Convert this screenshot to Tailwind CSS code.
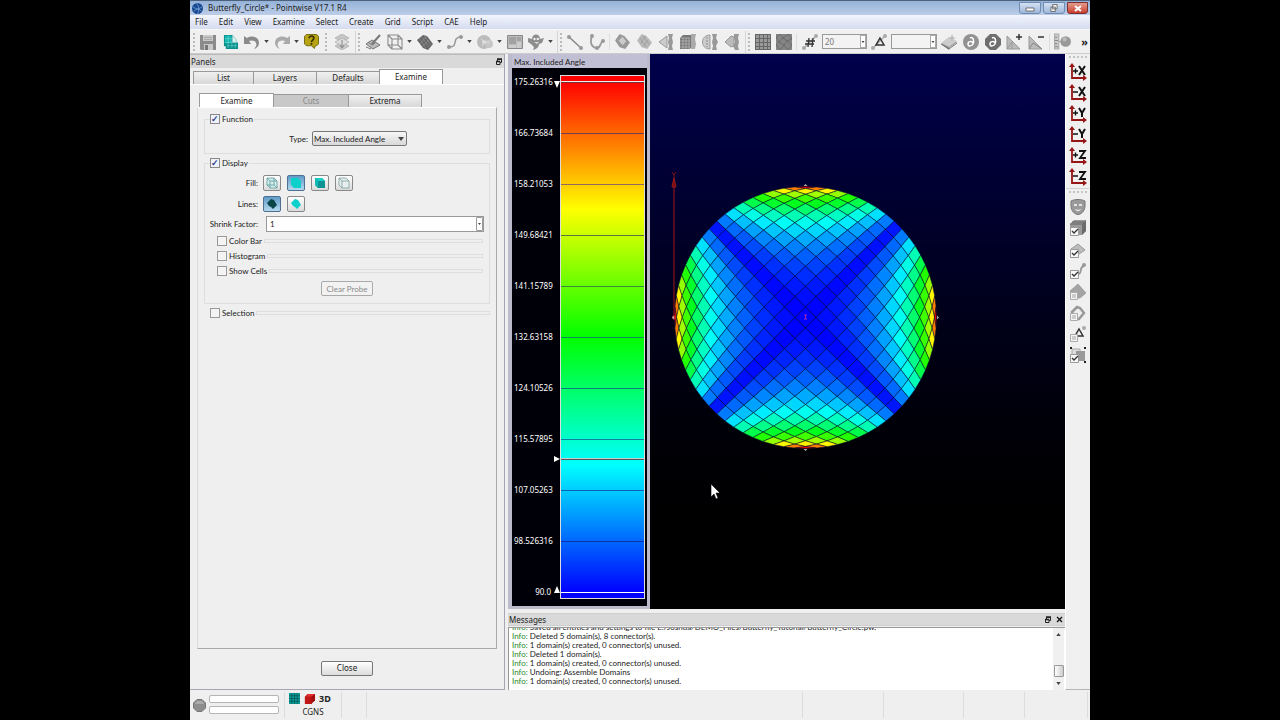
<!DOCTYPE html>
<html lang="en">
  <head>
    <meta charset="UTF-8" />
    <meta name="viewport" content="width=device-width, initial-scale=1.0" />
    <title>Butterfly_Circle* - Pointwise V17.1 R4</title>
    <script src="https://cdn.jsdelivr.net/npm/@tailwindcss/browser@4"></script>
  </head>
  <body class="h-screen overflow-hidden bg-black px-[190px] font-['Noto_Sans',sans-serif] text-[8px] leading-[10px] text-[#222]">
    <!-- Icon sprite -->
    <svg class="hidden" xmlns="http://www.w3.org/2000/svg">
      <symbol id="save" viewBox="0 0 16 16"><path fill="#8b8b8b" d="M0 1h16v15H1l-1-1z"/><path fill="#c9c9c9" d="M3 1h10v6H3zM4 10h9v6H4z"/><path fill="#777" d="M5 11h3v5H5z"/><path stroke="#aaa" d="M4 3.500h8M4 5.500h8"/></symbol>
      <symbol id="griddoc" viewBox="0 0 16 16"><path fill="#0b8f8c" d="M1 1h9v8h6v7H3v-3H1z"/><path fill="#16b6ae" d="M2 2h7v8H2z"/><path fill="none" stroke="#7fe6de" stroke-width=".5" d="M2 5h7M2 9h13M4 12.500h11M5.500 1v14M9.500 3v12M13 9v6"/><path fill="#d5f5f2" stroke="#6aa" stroke-width=".6" d="m10 1 4 5v3h-4z"/></symbol>
      <symbol id="undo" viewBox="0 0 16 16"><path fill="#8b8b8b" d="m0 2 3 2c5-3 12-1 12 5 0 3-2 5-5 6 2-2 3-4 2-6-1-3-5-3-7-2l2 3H0z"/></symbol>
      <symbol id="redo" viewBox="0 0 16 16"><path fill="#aaa" d="m16 2-3 2C8 1 1 3 1 9c0 3 2 5 5 6-2-2-3-4-2-6 1-3 5-3 7-2L9 10h7z"/></symbol>
      <symbol id="help" viewBox="0 0 16 16"><path fill="#b9a514" stroke="#6f640c" d="M2.500.500h11l2 2v8l-2 2H12l-1 3-3-3H2.500l-2-2v-8z"/><path fill="none" stroke="#3a3300" stroke-width="1.800" d="M5.500 4.500c0-3 5-3 5 0 0 2-2.500 2-2.500 4"/><circle cx="8" cy="10.500" r="1.100" fill="#3a3300"/></symbol>
      <symbol id="layers" viewBox="0 0 16 16"><path fill="#c6c6c6" stroke="#aaa" stroke-width=".7" d="m8 0 7 4-7 4-7-4z"/><path fill="#c6c6c6" stroke="#aaa" stroke-width=".7" d="m8 8 7 4-7 4-7-4z"/><path fill="#ddd" stroke="#aaa" stroke-width=".7" d="m8 4 7 4-7 4-7-4z"/><path stroke="#888" d="M8 6v7m-2-2 2 3 2-3" fill="none"/></symbol>
      <symbol id="brush" viewBox="0 0 16 16"><path fill="#bbb" stroke="#777" d="m1 10 6-4 8 5-7 4z"/><path fill="none" stroke="#777" d="m3 8 4 3 3-2M1 13l5 2"/><path stroke="#777" stroke-width="2" d="m7 10 8-9"/></symbol>
      <symbol id="cube" viewBox="0 0 16 16"><path fill="none" stroke="#8a8a8a" stroke-width="1.100" d="M1 1h10v10H1zM5 5h10v10H5zM1 1l4 4M11 1l4 4M1 11l4 4M11 11l4 4"/></symbol>
      <symbol id="diamond" viewBox="0 0 16 16"><path fill="#666" d="m0 6 6-5 4 1 6 8-5 6-5-2z"/><path fill="none" stroke="#999" stroke-width=".6" d="m2 4 7 10M4 2l8 11M7 2l7 9M3 10l7-8M5 13l8-8"/></symbol>
      <symbol id="curve" viewBox="0 0 16 16"><path fill="none" stroke="#999" stroke-width="1.500" d="M2 13c10 1 2-10 12-10"/><circle cx="2" cy="13" r="2" fill="#999"/><circle cx="14" cy="3" r="2" fill="#999"/></symbol>
      <symbol id="disc" viewBox="0 0 16 16"><circle cx="7" cy="8" r="7" fill="#bbb"/><circle cx="12" cy="10" r="4" fill="#c6c6c6"/><path fill="none" stroke="#ddd" d="M4 5l4 3-3 4M8 8h5"/><circle cx="7" cy="8" r="2" fill="#ddd"/></symbol>
      <symbol id="blocks" viewBox="0 0 16 16"><path fill="#bbb" stroke="#888" d="M.5 1.500h15v13H.500z"/><path fill="#a2a2a2" d="M2 3h7v7H2zM10 3h4v4h-4z"/><path fill="#ccc" d="M2 11h7v3H2zM10 8h4v6h-4z"/></symbol>
      <symbol id="ghost" viewBox="0 0 16 16"><path fill="#8d8d8d" d="M4 5c0-6 8-6 8 0l4-1-2 5-3 1c0 3-2 5-6 6l1-3-3-3-3-2 0-4z"/><circle cx="6.500" cy="5" r="1.200" fill="#eee"/><circle cx="9.800" cy="5" r="1.200" fill="#eee"/><path fill="#ddd" d="M6 8h5l-2 2z"/></symbol>
      <symbol id="line" viewBox="0 0 16 16"><path stroke="#888" stroke-width="1.500" d="m2 3 12 11"/><circle cx="2" cy="3" r="2" fill="#999"/><circle cx="14" cy="14" r="2" fill="#999"/></symbol>
      <symbol id="hook" viewBox="0 0 16 16"><path fill="none" stroke="#999" stroke-width="1.800" d="M3 2C0 10 4 14 8 14s3-6 6-7"/><circle cx="3" cy="2" r="2" fill="#999"/><circle cx="14" cy="7" r="2" fill="#999"/><circle cx="8" cy="14" r="2" fill="#999"/></symbol>
      <symbol id="diamond2" viewBox="0 0 16 16"><path fill="#999" d="m0 7 5-7 5 2 6 7-5 7-6-2z"/><path fill="#ccc" d="m4 7 4-4 4 5-4 4z"/></symbol>
      <symbol id="diamond3" viewBox="0 0 16 16"><path fill="#b9b9b9" d="m0 7 5-7 5 2 6 7-5 7-6-2z"/><path fill="none" stroke="#999" stroke-width=".8" d="m3 4 7 10M6 2l7 9M4 10l5-8M7 13l5-7"/></symbol>
      <symbol id="cone" viewBox="0 0 16 16"><path fill="#ccc" stroke="#999" d="m1 8 8-6v12z"/><path fill="#999" d="M10 0h5l-1 4 1 4-1 4 1 4h-5l1-4-1-4 1-4z"/></symbol>
      <symbol id="gridcube" viewBox="0 0 16 16"><path fill="#777" d="M0 4 3 1h9v11l-2 3H0z"/><path stroke="#bbb" stroke-width=".7" d="M0 7h10M0 10h10M0 13h10M3 4v11M6 4v11M9 4v11M0 4h10"/><path fill="#aaa" d="M11 0h5l-1 5 1 5-1 5h-4z"/></symbol>
      <symbol id="halves" viewBox="0 0 16 16"><path fill="#ccc" stroke="#999" d="M8 1C-2 1-2 15 8 15z"/><path fill="#999" d="M10 0h5l-1 4 2 4-2 4 1 4h-5l1-4-1-4 1-4z"/><path stroke="#888" d="M5 3v10" stroke-dasharray="2 1"/></symbol>
      <symbol id="plates" viewBox="0 0 16 16"><path fill="#bbb" stroke="#999" d="m1 8 6-6 3 1v9l-3 1z"/><path fill="#999" d="M10 0h5l-1 4 1 4-1 4 1 4h-4l-2-4 2-4-1-4z"/></symbol>
      <symbol id="mesh" viewBox="0 0 16 16"><path fill="#999" d="M0 0h16v16H0z"/><path stroke="#666" d="M0 .5h16M0 4.500h16M0 8.500h16M0 12.500h16M.5 0v16M4.500 0v16M8.500 0v16M12.500 0v16M0 15.500h16M15.500 0v16"/></symbol>
      <symbol id="trimesh" viewBox="0 0 16 16"><path fill="#858585" d="M0 0h16v16H0z"/><path fill="none" stroke="#666" stroke-width=".8" d="m0 3 4-3 3 4 5-4 4 5-5 2-4-3-4 4-3-5M3 8l5 3 3-4 5 4-4 5-4-5-4 5-4-5z"/></symbol>
      <symbol id="hash" viewBox="0 0 16 16"><path stroke="#aaa" stroke-width="1.500" d="m2 14 12-12"/><circle cx="2" cy="14" r="2" fill="#aaa"/><circle cx="14" cy="2" r="2" fill="#aaa"/><path stroke="#333" stroke-width="1.300" d="m7 4-1 9m5-9-1 9M4 7h9M3 10h9"/></symbol>
      <symbol id="delta" viewBox="0 0 16 16"><path stroke="#aaa" stroke-width="1.500" d="m2 14 12-12"/><circle cx="2" cy="14" r="2" fill="#aaa"/><circle cx="14" cy="2" r="2" fill="#aaa"/><path fill="none" stroke="#333" stroke-width="1.500" d="m9 4 4 7H5z"/></symbol>
      <symbol id="book" viewBox="0 0 16 16"><path fill="#888" d="m0 10 8-6 8 4-8 6v2z"/><path fill="#ccc" d="m0 9 8-6 8 4-8 6z"/><path stroke="#777" fill="none" d="m0 10 8 5 8-6"/><path fill="#bbb" d="m11 0 1 3 3 1-3 1-1 3-1-3-3-1 3-1z"/></symbol>
      <symbol id="partial" viewBox="0 0 16 16"><circle cx="8" cy="8" r="8" fill="#929292"/><path fill="none" stroke="#fff" stroke-width="1.500" d="M7 4c4-2 4 4 3 6s-5 3-5 0 4-3 5-1"/></symbol>
      <symbol id="partial8" viewBox="0 0 16 16"><path fill="#6e6e6e" d="M5 0h6l5 5v6l-5 5H5l-5-5V5z"/><path fill="none" stroke="#fff" stroke-width="1.500" d="M7 4c4-2 4 4 3 6s-5 3-5 0 4-3 5-1"/></symbol>
      <symbol id="triplus" viewBox="0 0 16 16"><path fill="#bbb" stroke="#999" d="M1 2v13h13z"/><path fill="none" stroke="#999" d="m1 15 5-7v7"/><path stroke="#333" stroke-width="1.500" d="M13 0v6m-3-3h6"/></symbol>
      <symbol id="triminus" viewBox="0 0 16 16"><path fill="#bbb" stroke="#999" d="M1 2v13h13z"/><path fill="none" stroke="#888" d="m1 15 4-6 9 6"/><path stroke="#333" stroke-width="1.500" d="M10 3h6"/></symbol>
      <symbol id="ruler" viewBox="0 0 16 16"><path fill="#ccc" stroke="#aaa" d="M.5 1h4v14h-4z"/><path stroke="#888" d="M1 4h2M1 7h3M1 10h2M1 13h3M5 8h3"/><circle cx="11" cy="8" r="5" fill="#999"/><circle cx="10" cy="6" r="2" fill="#bbb"/></symbol>
      <symbol id="down" viewBox="0 0 6 4"><path fill="#444" d="M0 0h6L3 4z"/></symbol>
      <symbol id="float" viewBox="0 0 8 8"><path fill="none" stroke="#222" d="M2.500 3V1.500h4v3H5M1 3.500h4v3H1.500v-3"/><path stroke="#222" stroke-width="1.500" d="M2 1h5M1 3.500h4"/></symbol>
      <!-- Axis triad -->
      <symbol id="axes" viewBox="0 0 18 18"><path fill="none" stroke="#961616" stroke-width="1.800" d="M3 2v13h13"/><path fill="#961616" d="M3 0 0 4h6zM18 15l-4-3v6z"/></symbol>
      <symbol id="x" viewBox="0 0 18 18"><path fill="none" stroke="#111" stroke-width="2" d="m10 3 6 9m0-9-6 9"/></symbol>
      <symbol id="y" viewBox="0 0 18 18"><path fill="none" stroke="#111" stroke-width="2" d="m10 3 3 5 3-5m-3 4v5"/></symbol>
      <symbol id="z" viewBox="0 0 18 18"><path fill="none" stroke="#111" stroke-width="1.800" d="M10 4h6l-5 7h6"/></symbol>
      <symbol id="plus" viewBox="0 0 18 18"><path stroke="#111" stroke-width="1.300" d="M4 8h5M6.500 5.500v5"/></symbol>
      <symbol id="minus" viewBox="0 0 18 18"><path stroke="#111" stroke-width="1.500" d="M4 8h5"/></symbol>
      <symbol id="mask" viewBox="0 0 16 16"><path fill="#9a9a9a" stroke="#777" d="M1 2c4-2 10-2 14 0v5c0 5-4 8.500-7 8.500S1 12 1 7z"/><path fill="#e4e4e4" d="M4 5h3v2H4zM9 5h3v2H9zM5 10c2 1 4 1 6 0-1 3-5 3-6 0z"/></symbol>
      <symbol id="tick" viewBox="0 0 16 16"><path fill="#f8f8f8" stroke="#999" d="M.500 7.500h8v8h-8z"/><path fill="none" stroke="#333" stroke-width="1.300" d="m2 11 2 2 4-4"/></symbol>
      <symbol id="notick" viewBox="0 0 16 16"><path fill="#f4f4f4" stroke="#aaa" d="M.500 8.500h7v7h-7z"/><path fill="#ccc" d="M2 10h4v4H2z"/></symbol>
      <symbol id="vblock" viewBox="0 0 16 16"><path fill="#999" d="M0 4 4 0h12v11l-4 4H0z"/><path fill="#6b6b6b" d="M12 4l4-4v11l-4 4z"/><path stroke="#555" stroke-width=".8" d="M0 4h12M2 2h12"/></symbol>
      <symbol id="vdomain" viewBox="0 0 16 16"><path fill="#bcbcbc" stroke="#999" d="m1 7 7-5 7 6-6 4z"/></symbol>
      <symbol id="vconn" viewBox="0 0 16 16"><path fill="none" stroke="#999" stroke-width="1.800" d="M6 11c8 1 2-7 8-8"/><circle cx="14" cy="2" r="2" fill="#999"/></symbol>
      <symbol id="vdb" viewBox="0 0 16 16"><path fill="#a4a4a4" stroke="#8d8d8d" stroke-width=".6" d="m0 7 8-7 8 9-6 5H2z"/></symbol>
      <symbol id="vring" viewBox="0 0 16 16"><path fill="#eee" stroke="#999" stroke-width="2.500" d="m2 7 5-5 3 1 4 5-5 6H5z"/></symbol>
      <symbol id="vdelta" viewBox="0 0 16 16"><circle cx="14" cy="2" r="2" fill="#aaa"/><path fill="none" stroke="#333" stroke-width="1.500" d="m9 3 4 7H5z"/></symbol>
      <symbol id="vsel" viewBox="0 0 16 16"><path fill="#ddd" stroke="#aaa" d="M2 2h8v8H2z"/><path fill="#999" d="M6 4h9v10H6z"/><path fill="#222" d="M0 0h2v2H0zM14 0h2v2h-2zM14 14h2v2h-2z"/></symbol>
    </svg>

    <div class="flex h-full flex-col bg-[#efefef]">
      <!-- Title bar -->
      <header class="flex h-[15px] shrink-0 items-center border-t border-[#4e617b] bg-gradient-to-b from-[#94b2d8] to-[#bccde8] pl-[2px] pr-[2px]">
        <svg class="h-[11px] w-[11px]" viewBox="0 0 12 12"><circle cx="6" cy="6" r="6" fill="#1a4a92"/><path fill="none" stroke="#8ab4e4" stroke-width=".7" d="M1 4c3 3 7 3 10 0M5 0c3 4 3 8 1 12M2 9c3-3 6-3 8 0"/></svg>
        <h1 class="ml-[5px] flex-1">Butterfly_Circle* - Pointwise V17.1 R4</h1>
        <div class="flex gap-[2px]">
          <button aria-label="Minimize" class="flex h-[12px] w-[22px] items-center justify-center rounded-b-[3px] border border-[#6f8bb0] bg-gradient-to-b from-[#d3e0f2] to-[#9fb8da]"><svg class="h-[8px] w-[10px]" viewBox="0 0 10 8"><path fill="#fff" stroke="#555" stroke-width=".8" d="M1 4h8v3H1z"/></svg></button>
          <button aria-label="Restore" class="flex h-[12px] w-[22px] items-center justify-center rounded-b-[3px] border border-[#6f8bb0] bg-gradient-to-b from-[#d3e0f2] to-[#9fb8da]"><svg class="h-[8px] w-[10px]" viewBox="0 0 10 9"><path fill="#eee" stroke="#666" d="M3.500.500h5v5h-5zM1.500 3.500h5v5h-5z"/></svg></button>
          <button aria-label="Close window" class="flex h-[12px] w-[21px] items-center justify-center rounded-b-[3px] border border-[#7a3030] bg-gradient-to-b from-[#e39a8c] to-[#c83a2c]"><svg class="h-[7px] w-[8px]" viewBox="0 0 8 7"><path stroke="#fff" stroke-width="2" d="m1 1 6 5m0-5L1 6"/></svg></button>
        </div>
      </header>

      <!-- Menu bar -->
      <nav class="flex h-[15px] shrink-0 items-center gap-[11px] border-b border-[#f6f6f6] bg-gradient-to-b from-[#f2f5fc] to-[#d6dcf0] pl-[5px]">
        <button>File</button><button>Edit</button><button>View</button><button>Examine</button><button>Select</button><button>Create</button><button>Grid</button><button>Script</button><button>CAE</button><button>Help</button>
      </nav>

      <!-- Toolbar -->
      <div class="flex h-[24px] shrink-0 items-center border-b border-[#ccc] bg-[#f0f0f0] pl-[3px]">
        <i class="mr-[2px] h-[18px] border-l-2 border-dotted border-[#bbb]"></i>
        <button aria-label="Save" class="flex w-[22px] justify-center"><svg class="size-[16px]"><use href="#save"/></svg></button>
        <button aria-label="Import grid" class="flex w-[22px] justify-center"><svg class="size-[15px]"><use href="#griddoc"/></svg></button>
        <button aria-label="Undo" class="flex w-[21px] justify-center"><svg class="size-[16px]"><use href="#undo"/></svg></button>
        <button aria-label="Undo list" class="flex w-[9px] justify-center"><svg class="h-[3px] w-[5px]"><use href="#down"/></svg></button>
        <button aria-label="Redo" class="flex w-[21px] justify-center"><svg class="size-[16px]"><use href="#redo"/></svg></button>
        <button aria-label="Redo list" class="flex w-[9px] justify-center"><svg class="h-[3px] w-[5px]"><use href="#down"/></svg></button>
        <button aria-label="Help" class="flex w-[21px] justify-center"><svg class="size-[15px]"><use href="#help"/></svg></button>
        <i class="mx-[3px] h-[18px] border-l-2 border-dotted border-[#bbb]"></i>
        <button aria-label="Layers" class="flex w-[24px] justify-center"><svg class="size-[16px]"><use href="#layers"/></svg></button>
        <i class="ml-[1px] h-[22px] border-l border-[#d5d5d5]"></i>
        <i class="mx-[2px] h-[18px] border-l-2 border-dotted border-[#bbb]"></i>
        <button aria-label="Draw" class="flex w-[22px] justify-center"><svg class="size-[16px]"><use href="#brush"/></svg></button>
        <button aria-label="Blocks" class="flex w-[21px] justify-center"><svg class="size-[16px]"><use href="#cube"/></svg></button>
        <button aria-label="Blocks list" class="flex w-[9px] justify-center"><svg class="h-[3px] w-[5px]"><use href="#down"/></svg></button>
        <button aria-label="Domains" class="flex w-[21px] justify-center"><svg class="size-[16px]"><use href="#diamond"/></svg></button>
        <button aria-label="Domains list" class="flex w-[9px] justify-center"><svg class="h-[3px] w-[5px]"><use href="#down"/></svg></button>
        <button aria-label="Connectors" class="flex w-[21px] justify-center"><svg class="size-[16px]"><use href="#curve"/></svg></button>
        <button aria-label="Connectors list" class="flex w-[9px] justify-center"><svg class="h-[3px] w-[5px]"><use href="#down"/></svg></button>
        <button aria-label="Database" class="flex w-[21px] justify-center"><svg class="size-[16px]"><use href="#disc"/></svg></button>
        <button aria-label="Database list" class="flex w-[9px] justify-center"><svg class="h-[3px] w-[5px]"><use href="#down"/></svg></button>
        <button aria-label="Assemble" class="flex w-[21px] justify-center"><svg class="size-[16px]"><use href="#blocks"/></svg></button>
        <button aria-label="Ghost" class="flex w-[21px] justify-center"><svg class="size-[16px]"><use href="#ghost"/></svg></button>
        <button aria-label="Ghost list" class="flex w-[9px] justify-center"><svg class="h-[3px] w-[5px]"><use href="#down"/></svg></button>
        <i class="ml-[2px] h-[22px] border-l border-[#d5d5d5]"></i>
        <i class="mx-[2px] h-[18px] border-l-2 border-dotted border-[#bbb]"></i>
        <button aria-label="Line" class="flex w-[22px] justify-center"><svg class="size-[16px]"><use href="#line"/></svg></button>
        <button aria-label="Curve" class="flex w-[22px] justify-center"><svg class="size-[16px]"><use href="#hook"/></svg></button>
        <i class="mx-[1px] h-[16px] border-l border-[#ddd]"></i>
        <button aria-label="Structured" class="flex w-[22px] justify-center"><svg class="size-[15px]"><use href="#diamond2"/></svg></button>
        <button aria-label="Unstructured" class="flex w-[22px] justify-center"><svg class="size-[15px]"><use href="#diamond3"/></svg></button>
        <button aria-label="Extrude" class="flex w-[22px] justify-center"><svg class="size-[16px]"><use href="#cone"/></svg></button>
        <button aria-label="Block extrude" class="flex w-[22px] justify-center"><svg class="size-[16px]"><use href="#gridcube"/></svg></button>
        <button aria-label="Rotate" class="flex w-[22px] justify-center"><svg class="size-[16px]"><use href="#halves"/></svg></button>
        <button aria-label="Translate" class="flex w-[22px] justify-center"><svg class="size-[16px]"><use href="#plates"/></svg></button>
        <i class="ml-[2px] h-[22px] border-l border-[#d5d5d5]"></i>
        <i class="mx-[2px] h-[18px] border-l-2 border-dotted border-[#bbb]"></i>
        <button aria-label="Structured mesh" class="flex w-[21px] justify-center"><svg class="size-[16px]"><use href="#mesh"/></svg></button>
        <button aria-label="Triangle mesh" class="flex w-[22px] justify-center"><svg class="size-[16px]"><use href="#trimesh"/></svg></button>
        <i class="mx-[1px] h-[16px] border-l border-[#ddd]"></i>
        <button aria-label="Dimension" class="flex w-[24px] justify-center"><svg class="size-[16px]"><use href="#hash"/></svg></button>
        <span class="relative">
          <input aria-label="Dimension value" value="20" class="block h-[15px] w-[45px] border border-[#999] bg-[#f3f3f3] pl-[2px] text-[#777]" />
          <span class="absolute right-[1px] top-[1px] flex h-[13px] w-[6px] items-center justify-center border border-[#aaa] bg-white"><svg class="h-[2px] w-[4px]"><use href="#down"/></svg></span>
        </span>
        <button aria-label="Spacing" class="flex w-[24px] justify-center"><svg class="size-[16px]"><use href="#delta"/></svg></button>
        <span class="relative">
          <input aria-label="Spacing value" class="block h-[15px] w-[46px] border border-[#999] bg-[#f3f3f3] pl-[2px]" />
          <span class="absolute right-[1px] top-[1px] flex h-[13px] w-[6px] items-center justify-center border border-[#aaa] bg-white"><svg class="h-[2px] w-[4px]"><use href="#down"/></svg></span>
        </span>
        <button aria-label="Solve" class="ml-[1px] flex w-[22px] justify-center"><svg class="size-[16px]"><use href="#book"/></svg></button>
        <button aria-label="Initialize" class="flex w-[22px] justify-center"><svg class="size-[16px]"><use href="#partial"/></svg></button>
        <button aria-label="Stop" class="flex w-[21px] justify-center"><svg class="size-[16px]"><use href="#partial8"/></svg></button>
        <button aria-label="Refine" class="flex w-[22px] justify-center"><svg class="size-[16px]"><use href="#triplus"/></svg></button>
        <button aria-label="Coarsen" class="flex w-[22px] justify-center"><svg class="size-[16px]"><use href="#triminus"/></svg></button>
        <i class="mx-[2px] h-[16px] border-l border-[#ddd]"></i>
        <button aria-label="Measure" class="flex w-[20px] shrink-0 justify-center"><svg class="size-[17px]"><use href="#ruler"/></svg></button>
        <button aria-label="More tools" class="ml-auto mr-[2px] text-[11px] font-bold">»</button>
      </div>

      <div class="flex min-h-0 flex-1">
        <!-- Panels -->
        <aside class="mr-[3px] flex w-[315px] shrink-0 flex-col border-b border-r border-[#a5a5b4]">
          <div class="flex h-[14px] shrink-0 items-center justify-between border-t border-[#bbb] bg-[#d9d9d9] pl-px pr-px">
            <h2>Panels</h2>
            <button aria-label="Float panel"><svg class="size-[8px]"><use href="#float"/></svg></button>
          </div>
          <div class="flex h-[17px] shrink-0 items-end border-b border-white pl-[3px] pt-[2px]">
            <button class="h-[13px] w-[61px] border border-b-0 border-[#999] bg-gradient-to-b from-[#f0f0f0] to-[#d8d8d8]">List</button>
            <button class="h-[13px] w-[63px] border border-b-0 border-l-0 border-[#999] bg-gradient-to-b from-[#f0f0f0] to-[#d8d8d8]">Layers</button>
            <button class="h-[13px] w-[62px] border border-x-0 border-b-0 border-[#999] bg-gradient-to-b from-[#f0f0f0] to-[#d8d8d8]">Defaults</button>
            <button class="h-[15px] w-[64px] border border-b-0 border-[#999] bg-white">Examine</button>
          </div>
          <div class="flex flex-1 flex-col px-[7px] pt-[8px]">
            <div class="flex h-[14px] shrink-0 items-end pl-[2px]">
              <button class="h-[14px] w-[75px] border border-b-0 border-[#999] bg-white">Examine</button>
              <button disabled class="h-[13px] w-[75px] border border-b-0 border-l-0 border-[#999] bg-[#c8c8c8] text-[#888]">Cuts</button>
              <button class="h-[13px] w-[73px] border border-b-0 border-l-0 border-[#999] bg-gradient-to-b from-[#f0f0f0] to-[#d8d8d8]">Extrema</button>
            </div>
            <div class="flex-1 border border-b-[#aaa] border-l-[#ddd] border-r-[#aaa] border-t-white px-[6px] pt-[6px] font-[Lato,sans-serif]">
              <fieldset class="h-[40px] border border-[#dedede]">
                <legend class="ml-[5px] pr-px"><label class="flex items-center gap-[2px]"><input type="checkbox" checked class="flex size-[10px] appearance-none items-center justify-center border border-[#888] bg-[#eef2fa] text-[9px] font-bold text-[#2c3f8c] checked:before:content-['✓']" />Function</label></legend>
                <div class="mt-[7px] flex items-center">
                  <label for="type" class="w-[103px] text-right">Type:</label>
                  <span class="relative ml-[4px]">
                    <select id="type" class="block h-[15px] w-[95px] appearance-none rounded-[2px] border border-[#777] bg-gradient-to-b from-[#f6f6f6] to-[#d8d8d8] pl-px"><option>Max. Included Angle</option></select>
                    <svg class="pointer-events-none absolute right-[3px] top-[6px] h-[4px] w-[6px]"><use href="#down"/></svg>
                  </span>
                </div>
              </fieldset>

              <fieldset class="mt-[4px] h-[146px] border border-[#dedede]">
                <legend class="ml-[5px] pr-px"><label class="flex items-center gap-[2px]"><input type="checkbox" checked class="flex size-[10px] appearance-none items-center justify-center border border-[#888] bg-[#eef2fa] text-[9px] font-bold text-[#2c3f8c] checked:before:content-['✓']" />Display</label></legend>
                <div class="mt-[7px] flex items-center">
                  <span class="mr-[5px] w-[53px] text-right">Fill:</span>
                  <div class="flex gap-[6px]">
                    <button aria-label="No fill" class="flex h-[16px] w-[18px] items-center justify-center rounded-[2px] border border-[#888] bg-gradient-to-b from-white to-[#dadada]"><svg class="size-[12px]" viewBox="0 0 12 12"><path fill="#d7eeee" stroke="#5a9a9a" stroke-width=".8" d="M1 1h7l3 3v7H4L1 8zM4 4h7M4 4v7M1 1l3 3M8 1v7H1M8 8l3 3"/></svg></button>
                    <button aria-label="Flat fill" class="flex h-[16px] w-[18px] items-center justify-center rounded-[2px] border border-[#4d6f92] bg-gradient-to-b from-[#5f9bc8] to-[#b4d9ef]"><svg class="size-[12px]" viewBox="0 0 12 12"><path fill="#0bd0cb" d="M1 1h7l3 3v7H4L1 8z"/></svg></button>
                    <button aria-label="Shaded fill" class="flex h-[16px] w-[18px] items-center justify-center rounded-[2px] border border-[#888] bg-gradient-to-b from-white to-[#dadada]"><svg class="size-[12px]" viewBox="0 0 12 12"><path fill="#0b9492" d="M1 1h7l3 3v7H4L1 8z"/><path fill="#15cfc6" d="M1 1h7l3 3H4z"/><path fill="#12b8b4" d="m1 1 3 3v7L1 8z"/></svg></button>
                    <button aria-label="Hidden line" class="flex h-[16px] w-[18px] items-center justify-center rounded-[2px] border border-[#888] bg-gradient-to-b from-white to-[#dadada]"><svg class="size-[12px]" viewBox="0 0 12 12"><path fill="#e8eeee" stroke="#7b9c9c" stroke-width=".8" d="M1 1h7l3 3v7H4L1 8zM4 4h7M4 4v7M1 1l3 3"/></svg></button>
                  </div>
                </div>
                <div class="mt-[5px] flex items-center">
                  <span class="mr-[5px] w-[53px] text-right">Lines:</span>
                  <div class="flex gap-[6px]">
                    <button aria-label="Black lines" class="flex h-[16px] w-[18px] items-center justify-center rounded-[2px] border border-[#4d6f92] bg-gradient-to-b from-[#5f9bc8] to-[#b4d9ef]"><svg class="size-[12px]" viewBox="0 0 12 12"><path fill="#0a4548" d="m1 5 4-4 3 1 3 5-4 4-2-2-2-1z"/></svg></button>
                    <button aria-label="Colored lines" class="flex h-[16px] w-[18px] items-center justify-center rounded-[2px] border border-[#888] bg-gradient-to-b from-white to-[#dadada]"><svg class="size-[12px]" viewBox="0 0 12 12"><path fill="#0bd0cb" d="m1 5 4-4 3 1 3 5-4 4-2-2-2-1z"/></svg></button>
                  </div>
                </div>
                <div class="mt-[4px] flex items-center">
                  <label for="shrink" class="mr-[8px] w-[53px] whitespace-nowrap text-right">Shrink Factor:</label>
                  <span class="relative mr-[5px] flex-1">
                    <input id="shrink" value="1" class="block h-[16px] w-full border border-[#999] bg-white pl-[3px]" />
                    <span class="absolute right-px top-px flex h-[14px] w-[7px] items-center justify-center rounded-[1px] border border-[#999] bg-white"><svg class="h-[2px] w-[3px]"><use href="#down"/></svg></span>
                  </span>
                </div>
                <div class="ml-[12px] mr-[6px] mt-[4px] flex flex-col gap-[5px]">
                  <div class="flex items-center gap-[2px]"><label class="flex items-center gap-[2px]"><input type="checkbox" class="size-[10px] appearance-none border border-[#999] bg-[#f4f4f4]" />Color Bar</label><i class="h-[4px] flex-1 border border-[#dedede]"></i></div>
                  <div class="flex items-center gap-[2px]"><label class="flex items-center gap-[2px]"><input type="checkbox" class="size-[10px] appearance-none border border-[#999] bg-[#f4f4f4]" />Histogram</label><i class="h-[4px] flex-1 border border-[#dedede]"></i></div>
                  <div class="flex items-center gap-[2px]"><label class="flex items-center gap-[2px]"><input type="checkbox" class="size-[10px] appearance-none border border-[#999] bg-[#f4f4f4]" />Show Cells</label><i class="h-[4px] flex-1 border border-[#dedede]"></i></div>
                </div>
                <button disabled class="mx-auto mt-[5px] block h-[15px] w-[52px] rounded-[2px] border border-[#aaa] bg-[#f2f2f2] text-[#8a8a8a]">Clear Probe</button>
              </fieldset>

              <div class="mt-[4px] flex items-center gap-[2px] pl-[6px]"><label class="flex items-center gap-[2px]"><input type="checkbox" class="size-[10px] appearance-none border border-[#999] bg-[#f4f4f4]" />Selection</label><i class="h-[4px] flex-1 border border-[#dedede]"></i></div>
            </div>
            <div class="flex h-[40px] shrink-0 items-center justify-center pb-[2px]">
              <button class="h-[15px] w-[52px] rounded-[2px] border border-[#777] bg-gradient-to-b from-white to-[#dcdcdc]">Close</button>
            </div>
          </div>
        </aside>

        <main class="flex min-w-0 flex-1 flex-col">
          <div class="flex min-h-0 flex-1">
            <!-- Color scale -->
            <section class="flex w-[142px] shrink-0 flex-col border-b-[3px] border-l-4 border-r-[3px] border-[#bbbbcb] bg-[#c0bfd3]">
              <h2 class="h-[14px] shrink-0 pl-[2px] pt-[3px] font-[Lato,sans-serif]">Max. Included Angle</h2>
              <div class="relative flex flex-1 justify-between bg-[#000008] pl-[2px] pr-[2px]">
                <div class="flex w-[37px] flex-col justify-between pb-[9px] pt-[9px] text-right text-white">
                  <span>175.26316</span><span>166.73684</span><span>158.21053</span><span>149.68421</span><span>141.15789</span><span>132.63158</span><span>124.10526</span><span>115.57895</span><span>107.05263</span><span>98.526316</span><span>90.0</span>
                </div>
                <div class="my-[7px] flex w-[85px] flex-col justify-between border border-[#ddd] bg-[linear-gradient(#f00_1%,#ff0_25.500%,#0f0_50%,#0ff_74.500%,#00f_99%)] py-[5px]">
                  <i class="h-[2px] border-b border-[#7a3030] bg-[#eee]"></i>
                  <i class="h-px bg-[#704050]"></i><i class="h-px bg-[#906a60]"></i><i class="h-px bg-[#587840]"></i><i class="h-px bg-[#3a8a40]"></i><i class="h-px bg-[#108a60]"></i><i class="h-px bg-[#107a80]"></i><i class="h-px bg-[#1080a0]"></i><i class="h-px bg-[#0a60b0]"></i><i class="h-px bg-[#0a30b0]"></i>
                  <i class="h-px bg-white"></i>
                </div>
                <!-- Range markers -->
                <svg class="absolute right-[87px] top-[13px] h-[7px] w-[6px]" viewBox="0 0 6 7"><path fill="#fff" d="M0 0h6L3 7z"/></svg>
                <svg class="absolute bottom-[13px] right-[87px] h-[7px] w-[6px]" viewBox="0 0 6 7"><path fill="#fff" d="M0 7h6L3 0z"/></svg>
                <svg class="absolute right-[87px] top-[388px] h-[6px] w-[6px]" viewBox="0 0 6 6"><path fill="#fff" d="M0 0v6l6-3z"/></svg>
                <i class="absolute right-[3px] top-[390px] h-[2px] w-[83px] border-b border-[#555] bg-[#ccc]"></i>
              </div>
            </section>

            <!-- Viewport -->
            <section class="min-w-0 flex-1 overflow-hidden bg-gradient-to-b from-[#00004c] to-black">
              <svg id="view" class="h-full w-full" viewBox="0 0 415 554" preserveAspectRatio="xMinYMin meet">
                <g id="cells" stroke="#001030" stroke-width=".5"></g>
                <g stroke="#a01818" fill="none"><path d="M24 262V128"/><path fill="#701010" d="m24 124-2 9h4z"/><path d="m22 118 2 3 2-3m-2 3v3" stroke-width=".8"/><path d="M154 261h3m-1.500 0v4m-1.500 0h3" stroke="#c030a0" stroke-width=".8"/></g>
                <circle cx="24" cy="263.500" r="2" fill="#d02020"/>
                <path fill="#aaa" d="m155.500 130 2 2h-4zM155.500 397l2-2h-4zM289 263.500l-2-2v4zM22 263.500l2-2v4z"/>
                <path fill="#fff" stroke="#000" stroke-width=".6" d="M61 430v13l3-3 2 5 2-1-2-5h4z"/>
              </svg>
            </section>
          </div>

          <!-- Messages -->
          <section class="mt-[4px] flex h-[77px] shrink-0 flex-col">
            <div class="flex h-[13px] shrink-0 items-center border-y border-[#cfcfcf] bg-[#d9d9d9] pl-px pr-[2px]">
              <h2 class="flex-1">Messages</h2>
              <button aria-label="Float messages" class="mr-[4px]"><svg class="size-[8px]"><use href="#float"/></svg></button>
              <button aria-label="Close messages"><svg class="size-[7px]" viewBox="0 0 7 7"><path stroke="#111" stroke-width="1.300" d="m1 1 5 5m0-5L1 6"/></svg></button>
            </div>
            <div class="mt-px flex min-h-0 flex-1 border-l border-t border-[#999] bg-white">
              <div class="flex flex-1 flex-col justify-end overflow-hidden whitespace-nowrap pb-[4px] pl-[3px] font-[Lato,sans-serif] leading-[9px]">
                <p><span class="text-[#2a8a2a]">Info:</span> Saved all entities and settings to file E:/Joshua/DEMO_Files/Butterfly_Tutorial/Butterfly_Circle.pw.</p>
                <p><span class="text-[#2a8a2a]">Info:</span> Deleted 5 domain(s), 8 connector(s).</p>
                <p><span class="text-[#2a8a2a]">Info:</span> 1 domain(s) created, 0 connector(s) unused.</p>
                <p><span class="text-[#2a8a2a]">Info:</span> Deleted 1 domain(s).</p>
                <p><span class="text-[#2a8a2a]">Info:</span> 1 domain(s) created, 0 connector(s) unused.</p>
                <p><span class="text-[#2a8a2a]">Info:</span> Undoing: Assemble Domains</p>
                <p><span class="text-[#2a8a2a]">Info:</span> 1 domain(s) created, 0 connector(s) unused.</p>
              </div>
              <div class="mr-px flex w-[11px] flex-col items-center bg-[#f0f0f0] py-[5px]">
                <svg class="h-[3px] w-[5px] rotate-180"><use href="#down"/></svg>
                <i class="mt-auto h-[12px] w-[10px] rounded-[1px] border border-[#999] bg-gradient-to-r from-white to-[#ccc]"></i>
                <svg class="mt-[5px] h-[3px] w-[5px]"><use href="#down"/></svg>
              </div>
            </div>
          </section>
        </main>

        <!-- View toolbar -->
        <div class="flex w-[25px] shrink-0 flex-col items-center border-b border-l border-b-[#b5b5b5] border-l-white bg-[#f0f0f0] pr-px pt-[2px]">
          <i class="mb-[3px] w-[18px] border-t-2 border-dotted border-[#c4c4c4]"></i>
          <button aria-label="+X view" class="flex h-[21px] items-center"><svg class="size-[18px]"><use href="#axes"/><use href="#plus"/><use href="#x"/></svg></button>
          <button aria-label="-X view" class="flex h-[21px] items-center"><svg class="size-[18px]"><use href="#axes"/><use href="#minus"/><use href="#x"/></svg></button>
          <button aria-label="+Y view" class="flex h-[21px] items-center"><svg class="size-[18px]"><use href="#axes"/><use href="#plus"/><use href="#y"/></svg></button>
          <button aria-label="-Y view" class="flex h-[21px] items-center"><svg class="size-[18px]"><use href="#axes"/><use href="#minus"/><use href="#y"/></svg></button>
          <button aria-label="+Z view" class="flex h-[21px] items-center"><svg class="size-[18px]"><use href="#axes"/><use href="#plus"/><use href="#z"/></svg></button>
          <button aria-label="-Z view" class="flex h-[21px] items-center"><svg class="size-[18px]"><use href="#axes"/><use href="#minus"/><use href="#z"/></svg></button>
          <i class="mb-[2px] mt-px w-full border-t border-[#d0d0d0]"></i>
          <i class="mb-[3px] w-[18px] border-t-2 border-dotted border-[#c4c4c4]"></i>
          <button aria-label="Mask" class="flex h-[21px] items-center"><svg class="size-[16px]"><use href="#mask"/></svg></button>
          <button aria-label="Show blocks" class="flex h-[22px] items-center"><svg class="size-[16px]"><use href="#vblock"/><use href="#tick"/></svg></button>
          <button aria-label="Show domains" class="flex h-[21px] items-center"><svg class="size-[16px]"><use href="#vdomain"/><use href="#tick"/></svg></button>
          <button aria-label="Show connectors" class="flex h-[21px] items-center"><svg class="size-[16px]"><use href="#vconn"/><use href="#tick"/></svg></button>
          <button aria-label="Show database" class="flex h-[21px] items-center"><svg class="size-[16px]"><use href="#vdb"/><use href="#notick"/></svg></button>
          <button aria-label="Show boundaries" class="flex h-[21px] items-center"><svg class="size-[16px]"><use href="#vring"/><use href="#notick"/></svg></button>
          <button aria-label="Show spacings" class="flex h-[21px] items-center"><svg class="size-[16px]"><use href="#vdelta"/><use href="#notick"/></svg></button>
          <button aria-label="Show selection" class="flex h-[21px] items-center"><svg class="size-[16px]"><use href="#vsel"/><use href="#tick"/></svg></button>
        </div>
      </div>

      <!-- Status bar -->
      <footer class="flex h-[30px] shrink-0 pb-[2px] pl-[3px] pt-[2px]">
        <svg class="mr-[3px] mt-[7px] size-[13px]" viewBox="0 0 13 13"><path fill="#8d8d8d" stroke="#777" d="M4 .5h5L12.500 4v5L9 12.500H4L.500 9V4z"/><path fill="#aaa" d="M4 2h5l2 3H2z"/></svg>
        <div class="flex w-[70px] flex-col gap-[3px] pt-[3px]">
          <i class="h-[8px] rounded-[2px] border border-[#b5b5b5] bg-white"></i>
          <i class="h-[8px] rounded-[2px] border border-[#b5b5b5] bg-white"></i>
        </div>
        <div class="ml-[5px] flex w-[58px] flex-col items-center border-x border-[#dcdcdc] pt-[1px]">
          <div class="flex items-center gap-[4px] self-start pl-[4px]">
            <svg class="size-[11px]" viewBox="0 0 12 12"><path fill="#0a9a97" d="M0 0h12v12H0z"/><path stroke="#05504f" stroke-width=".7" d="M0 3h12M0 6h12M0 9h12M3 0v12M6 0v12M9 0v12"/></svg>
            <svg class="size-[11px]" viewBox="0 0 12 12"><path fill="#a30d0d" d="M1 4 4 1h8v7l-4 4H1z"/><path fill="#e03030" d="M1 4 4 1h8L8 4z"/><path fill="#c01616" d="M1 4h7v8H1z"/></svg>
            <b class="text-[9px] leading-[11px]">3D</b>
          </div>
          <span class="mt-[3px]">CGNS</span>
        </div>
        <div class="w-[25px] border-r border-[#dcdcdc]"></div>
        <div class="flex-1 border-r border-[#dcdcdc]"></div>
        <div class="w-[81px] border-r border-[#dcdcdc]"></div>
        <div class="w-[80px] border-r border-[#dcdcdc]"></div>
        <div class="w-[61px] border-r border-[#dcdcdc]"></div>
        <div class="mr-[2px] w-[63px] border-r border-[#dcdcdc]"></div>
      </footer>
    </div>

    <script>
      // One structured domain on a circle, corners at the four compass points
      const N = 19;
      const CX = 155.5, CY = 263.5, R = 131;

      function node(i, j) {
        const u = (2 * i) / N - 1;
        const v = (2 * j) / N - 1;
        const q = Math.PI / 4;
        const x = u * Math.cos(v * q) + Math.sin(u * q) - u * Math.SQRT1_2;
        const y = v * Math.cos(u * q) + Math.sin(v * q) - v * Math.SQRT1_2;
        return [CX + R * (x - y) * Math.SQRT1_2, CY + R * (x + y) * Math.SQRT1_2];
      }

      function maxAngle(p) {
        let max = 0;
        for (let k = 0; k < 4; k++) {
          const a = p[(k + 3) % 4], b = p[k], c = p[(k + 1) % 4];
          const x1 = a[0] - b[0], y1 = a[1] - b[1], x2 = c[0] - b[0], y2 = c[1] - b[1];
          const cos = (x1 * x2 + y1 * y2) / (Math.hypot(x1, y1) * Math.hypot(x2, y2));
          max = Math.max(max, (Math.acos(cos) * 180) / Math.PI);
        }
        return max;
      }

      function color(angle) {
        const t = Math.min(1, Math.max(0, (angle - 90) / 85.26));
        return `hsl(${240 * (1 - t)} 100% 50%)`;
      }

      let html = '';
      for (let i = 0; i < N; i++) {
        for (let j = 0; j < N; j++) {
          const p = [node(i, j), node(i + 1, j), node(i + 1, j + 1), node(i, j + 1)];
          html += `<polygon points="${p.map(n => n.join(',')).join(' ')}" fill="${color(maxAngle(p))}"/>`;
        }
      }
      document.getElementById('cells').innerHTML = html;
    </script>
  </body>
</html>
